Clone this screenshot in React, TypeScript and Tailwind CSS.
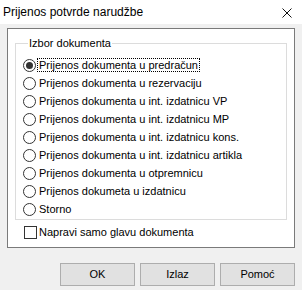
const options = [
  "Prijenos dokumenta u predračun",
  "Prijenos dokumenta u rezervaciju",
  "Prijenos dokumenta u int. izdatnicu VP",
  "Prijenos dokumenta u int. izdatnicu MP",
  "Prijenos dokumenta u int. izdatnicu kons.",
  "Prijenos dokumenta u int. izdatnicu artikla",
  "Prijenos dokumenta u otpremnicu",
  "Prijenos dokumeta u izdatnicu",
  "Storno",
];

function Radio({ checked }: { checked?: boolean }) {
  return (
    <span className="flex h-[13px] w-[13px] shrink-0 items-center justify-center rounded-full border border-[#333333] bg-white">
      {checked && <span className="h-[7px] w-[7px] rounded-full bg-[#333333]" />}
    </span>
  );
}

export default function App() {
  return (
    <div
      className="h-[290px] w-[302px] overflow-hidden bg-[#f0f0f0] text-[11px] text-black"
      style={{ fontFamily: '"Liberation Sans", Arial, sans-serif' }}
    >
      {/* Title bar */}
      <div className="flex h-[24px] items-center justify-between bg-white pl-[3px] pr-[10px]">
        <span className="text-[12px] leading-none">Prijenos potvrde narudžbe</span>
        <svg width="10" height="10" viewBox="0 0 10 10" className="mt-[1px]">
          <path d="M0.5 0.5 L9.5 9.5 M9.5 0.5 L0.5 9.5" stroke="#111" strokeWidth="1" />
        </svg>
      </div>

      {/* Panel */}
      <div className="mx-[7px] mt-[4px] h-[220px] border border-[#7a7a7a] bg-white">
        <fieldset className="mx-[7px] mt-[7px] border border-[#dcdcdc] pb-[1px] pl-[7px]">
          <legend className="ml-[5px] px-[1px] leading-[14px]">Izbor dokumenta</legend>
          <div className="pt-[6px]">
            {options.map((o, i) => (
              <div key={o} className="flex h-[18px] items-center gap-[1px]">
                <Radio checked={i === 0} />
                <span
                  className={
                    i === 0
                      ? "border border-dotted border-black px-[1px] leading-[12px]"
                      : "border border-transparent px-[1px] leading-[12px]"
                  }
                >
                  {o}
                </span>
              </div>
            ))}
          </div>
        </fieldset>
        <div className="mt-[3px] flex h-[18px] items-center gap-[2px] pl-[16px]">
          <span className="h-[13px] w-[13px] shrink-0 border border-[#333333] bg-white" />
          <span>Napravi samo glavu dokumenta</span>
        </div>
      </div>

      {/* Buttons */}
      <div className="mt-[15px] flex justify-end gap-[5px] pr-[7px]">
        {["OK", "Izlaz", "Pomoć"].map((b) => (
          <button
            key={b}
            className="h-[23px] w-[75px] border border-[#adadad] bg-[#e1e1e1] text-center text-[11px]"
          >
            {b}
          </button>
        ))}
      </div>
    </div>
  );
}
